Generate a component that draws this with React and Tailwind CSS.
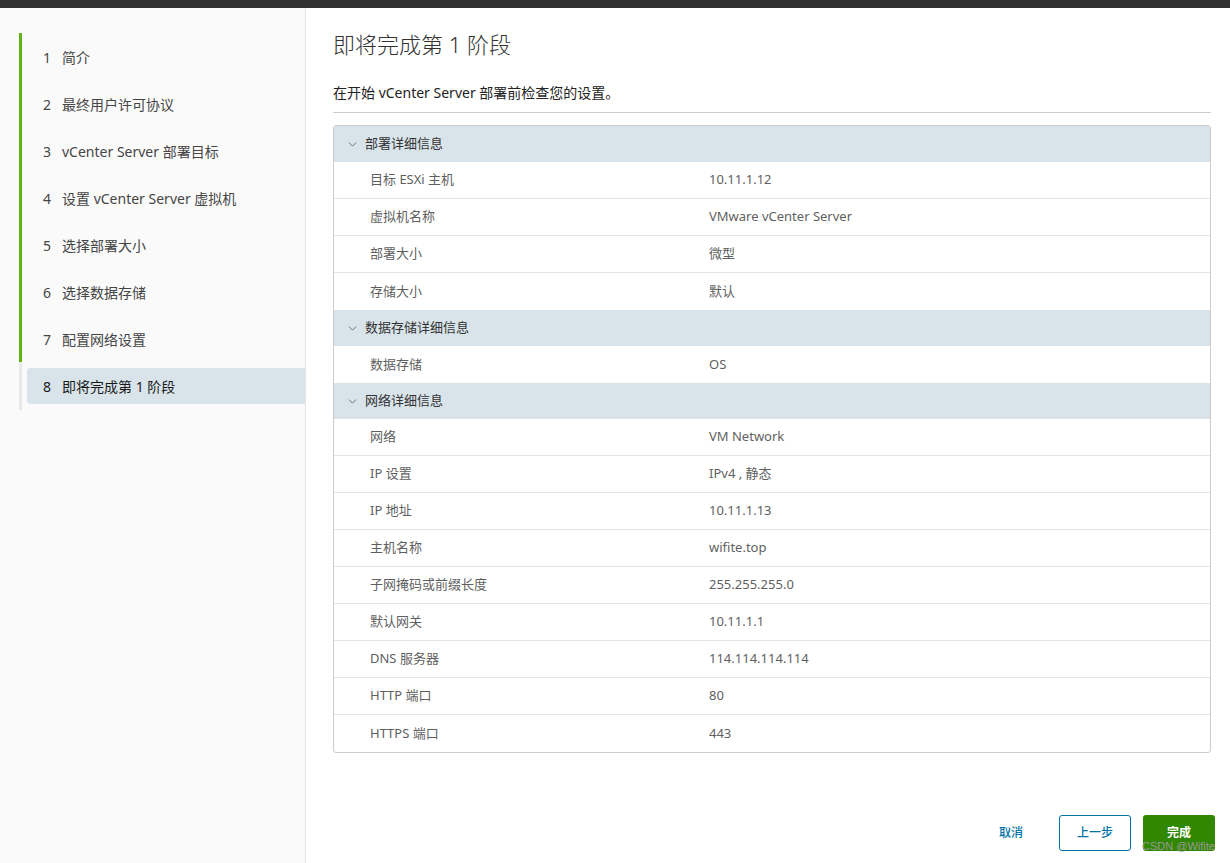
import React from 'react';
import { ChevronDown } from 'lucide-react';

const STEPS = [
  "简介",
  "最终用户许可协议",
  "vCenter Server 部署目标",
  "设置 vCenter Server 虚拟机",
  "选择部署大小",
  "选择数据存储",
  "配置网络设置",
  "即将完成第 1 阶段"
];

const SECTIONS = [
  {
    title: "部署详细信息",
    rows: [
      ["目标 ESXi 主机", "10.11.1.12"],
      ["虚拟机名称", "VMware vCenter Server"],
      ["部署大小", "微型"],
      ["存储大小", "默认"]
    ]
  },
  {
    title: "数据存储详细信息",
    rows: [["数据存储", "OS"]]
  },
  {
    title: "网络详细信息",
    rows: [
      ["网络", "VM Network"],
      ["IP 设置", "IPv4 , 静态"],
      ["IP 地址", "10.11.1.13"],
      ["主机名称", "wifite.top"],
      ["子网掩码或前缀长度", "255.255.255.0"],
      ["默认网关", "10.11.1.1"],
      ["DNS 服务器", "114.114.114.114"],
      ["HTTP 端口", "80"],
      ["HTTPS 端口", "443"]
    ]
  }
];

export default function App() {
  return (
    <div className="w-[1230px] h-[863px] flex flex-col bg-white overflow-hidden relative" style={{ fontFamily: '"Noto Sans", "Noto Sans CJK SC", sans-serif' }}>
      <div className="h-[8px] bg-[#313131] shrink-0" />
      <div className="flex flex-1 min-h-0">
        {/* Sidebar */}
        <div className="w-[306px] shrink-0 bg-[#fafafa] border-r border-[#e6e6e6] pt-[25px]">
          <div className="flex flex-col ml-[19px]">
            {STEPS.map((s, i) => {
              const active = i === STEPS.length - 1;
              return (
                <div key={s} className={`flex flex-col border-l-[3px] ${active ? 'border-[#e8e8e8] py-[6px]' : 'border-[#60b515] pt-[6px] pb-[5px]'}`}>
                  <div className={`h-[36px] flex items-center ml-[5px] pl-[16px] text-[14px] ${active ? 'bg-[#d9e4ea] rounded-l-[3px] text-[#1a1a1a]' : 'text-[#454545]'}`}>
                    <span className="w-[19px]">{i + 1}</span>
                    <span>{s}</span>
                  </div>
                </div>
              );
            })}
          </div>
        </div>

        {/* Main */}
        <div className="flex-1 flex flex-col pl-[27px] pr-[19px]">
          <h1 className="text-[22px] text-[#333] font-light mt-[22px] leading-[28px]">即将完成第 1 阶段</h1>
          <p className="text-[14px] text-[#222] mt-[25px] leading-[20px]">在开始 vCenter Server 部署前检查您的设置。</p>
          <div className="border-b border-[#c6cfd4] mt-[9px]" />
          <div className="mt-[12px] border border-[#cccccc] rounded-[3px] overflow-hidden">
            {SECTIONS.map((sec) => (
              <div key={sec.title}>
                <div className="h-[36px] bg-[#d9e4ea] flex items-center pl-[12px] text-[13px] text-[#333]">
                  <ChevronDown className="w-[13px] h-[13px] text-[#555] mr-[6px]" strokeWidth={1.5} />
                  <span>{sec.title}</span>
                </div>
                {sec.rows.map(([k, v], idx) => (
                  <div key={k} className={`h-[37px] flex items-center text-[13px] text-[#5f5f5f] ${idx < sec.rows.length - 1 ? 'border-b border-[#e4e4e4]' : ''}`}>
                    <span className="w-[375px] pl-[36px]">{k}</span>
                    <span>{v}</span>
                  </div>
                ))}
              </div>
            ))}
          </div>
          <div className="mt-auto mb-[12px] -mr-[4px] flex items-center justify-end gap-[12px]">
            <button className="h-[36px] w-[72px] text-[12px] font-medium text-[#0072a3]">取消</button>
            <button className="h-[36px] w-[72px] text-[12px] font-medium text-[#0072a3] border border-[#0072a3] rounded-[3px]">上一步</button>
            <button className="h-[36px] w-[72px] text-[12px] font-semibold text-white bg-[#318700] rounded-[3px]">完成</button>
          </div>
        </div>
      </div>
      <div className="absolute right-[15px] bottom-[9px] text-[11px] text-[#999]" style={{ fontFamily: '"Liberation Sans", sans-serif' }}>CSDN @Wifite</div>
    </div>
  );
}
